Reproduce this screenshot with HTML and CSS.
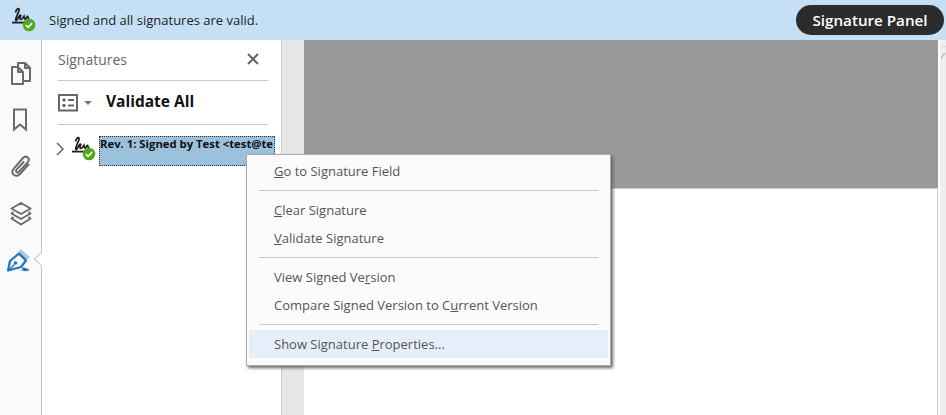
FILE: index.html
```html
<!DOCTYPE html>
<html>
<head>
    <meta charset="utf-8">
    <title>Signatures</title>
    <link rel="stylesheet" href="styles.css">
</head>
<body>
    <svg class="defs" width="0" height="0">
        <symbol id="signed" viewBox="0 0 26 26">
            <path d="M4.500 5.500C5 3 7 .8 8 2c.8 1-.7 3.500-2 6.500-1 2.500-1.800 5-1 5.300 1 .4 2-3 3.500-5 1-1.200 1.700-.6 1 .8-.8 1.500-.8 3 .7 2.700 1.200-.3 1.800-1.500 2.800-3 .4 2 .6 3 1.600 2.500.8-.4 1.500-2 2-3 0 2 .5 2.500 1.700 2.200" fill="none" stroke="#1d1d1d" stroke-width="1.700"/>
            <rect x="1" y="14.700" width="13" height="1.800" fill="#1d1d1d"/>
            <circle cx="18" cy="18" r="6.300" fill="#4fa91c"/>
            <path d="M14.800 18l2.300 2.300 4-4.100" fill="none" stroke="#fff" stroke-width="1.700"/>
        </symbol>
    </svg>

    <div class="top-bar">
        <div class="status">
            <svg class="sig-icon" width="26" height="26"><use href="#signed"/></svg>
            <span>Signed and all signatures are valid.</span>
        </div>
        <button class="panel-btn">Signature Panel</button>
    </div>

    <div class="main">
        <div class="rail">
            <svg class="rail-icon" width="24" height="24" viewBox="0 0 24 24">
                <path d="M9 6V2h7l5 5v13h-7M16 2v5h5M9 6H3v17h11v-3M9 6l5 5v9M9 6v5h5" fill="none" stroke="#6b6b6b" stroke-width="2" stroke-linejoin="round"/>
            </svg>
            <svg class="rail-icon" width="24" height="24" viewBox="0 0 24 24">
                <path d="M5 1.500h12v20l-6-5-6 5z" fill="none" stroke="#6b6b6b" stroke-width="2"/>
            </svg>
            <svg class="rail-icon" width="24" height="24" viewBox="0 0 24 24">
                <path d="M20 9l-9 10c-2 2.200-5 2.200-6.500.6s-1.500-4 .5-6.300L14 3c1.500-1.600 3.500-1.600 4.800-.4s1.300 3-.2 4.700l-8.500 9.400c-.8.900-1.800 1-2.500.3s-.6-1.700.2-2.600L15 6.500" fill="none" stroke="#6b6b6b" stroke-width="2"/>
            </svg>
            <svg class="rail-icon" width="24" height="24" viewBox="0 0 24 24">
                <path d="M12 1l9.500 5.500-9.500 5.500-9.500-5.500z" fill="none" stroke="#6b6b6b" stroke-width="2" stroke-linejoin="round"/>
                <path d="M4.500 10L2.500 11.500l9.500 5.500 9.500-5.500-2-1.500M4.500 15L2.500 16.500l9.500 6 9.500-6-2-1.500" fill="none" stroke="#6b6b6b" stroke-width="2" stroke-linejoin="round"/>
            </svg>
            <div class="rail-active">
                <svg class="rail-icon pen" width="24" height="24" viewBox="0 0 24 24">
                    <path d="M10 5L13.500 0 23 8l-4 4z" fill="#a9cbe8"/>
                    <path d="M1 21.500L3 12l9-7.500 7 7-5 6.500z" fill="none" stroke="#2272c3" stroke-width="2.200" stroke-linejoin="round"/>
                    <path d="M1 21.500l6.500-6" stroke="#2272c3" stroke-width="1.500"/>
                    <circle cx="8.500" cy="14" r="1.800" fill="#2272c3"/>
                    <path d="M15.500 21.500c.5-2 1-3 1.500-2s0 2 .5 2 1-2 1.500-2 0 2 .5 2 1.500-1 2.500-1" fill="none" stroke="#2272c3" stroke-width="1.700"/>
                </svg>
                <span class="rail-notch"></span>
            </div>
        </div>

        <div class="panel">
            <div class="panel-head">
                <span class="panel-title">Signatures</span>
                <svg class="close" width="14" height="14" viewBox="0 0 14 14">
                    <path d="M2 2l10 10M12 2L2 12" stroke="#666" stroke-width="2"/>
                </svg>
            </div>
            <div class="panel-tools">
                <svg width="20" height="18" viewBox="0 0 20 18">
                    <rect x="1" y="1" width="18" height="15.500" fill="none" stroke="#666" stroke-width="2"/>
                    <circle cx="6" cy="6" r="1.700" fill="#666"/>
                    <circle cx="6" cy="11.500" r="1.700" fill="#666"/>
                    <path d="M10 6h6M10 11.500h6" stroke="#666" stroke-width="2"/>
                </svg>
                <span class="caret"></span>
                <span class="validate">Validate All</span>
            </div>
            <div class="sig-row">
                <svg class="chev" width="10" height="14" viewBox="0 0 10 14">
                    <path d="M2 1l6 6-6 6" fill="none" stroke="#666" stroke-width="1.500"/>
                </svg>
                <svg class="sig-icon-small" width="26" height="26"><use href="#signed"/></svg>
                <div class="sig-label">Rev. 1: Signed by Test &lt;test@te</div>
            </div>
        </div>

        <div class="gutter"></div>

        <div class="doc">
            <div class="doc-gray"></div>
            <div class="doc-page"></div>
        </div>

        <div class="scrollbar">
            <div class="scroll-cap"></div>
            <svg width="6" height="8" viewBox="0 0 6 8">
                <path d="M1 7l4-5" stroke="#bbb" stroke-width="1.500"/>
            </svg>
        </div>
    </div>

    <div class="menu">
        <div class="menu-item"><u>G</u>o to Signature Field</div>
        <div class="menu-sep"></div>
        <div class="menu-item"><u>C</u>lear Signature</div>
        <div class="menu-item"><u>V</u>alidate Signature</div>
        <div class="menu-sep"></div>
        <div class="menu-item">View Signed Ve<u>r</u>sion</div>
        <div class="menu-item">Compare Signed Version to C<u>u</u>rrent Version</div>
        <div class="menu-sep"></div>
        <div class="menu-item active">Show Signature <u>P</u>roperties...</div>
    </div>
</body>
</html>
```

FILE: styles.css
```css
html, body {
    height: 100%;
}
body {
    margin: 0;
    overflow: hidden;
    background-color: white;
    color: #444;
    font-family: "Open Sans", sans-serif;
    font-size: 13px;
    display: flex;
    flex-direction: column;
}
.defs {
    position: absolute;
}

.top-bar {
    height: 40px;
    flex: none;
    background-color: #c5e0f5;
    display: flex;
    align-items: center;
    justify-content: space-between;
    padding: 0 2px 0 11px;
}
.status {
    display: flex;
    align-items: center;
    gap: 12px;
    color: #222;
    font-size: 13px;
}
.sig-icon {
    display: block;
    flex: none;
}
.panel-btn {
    width: 148px;
    height: 30px;
    border: none;
    border-radius: 15px;
    background-color: #2c2c2c;
    color: white;
    font-family: inherit;
    font-size: 15.2px;
    font-weight: 600;
}

.main {
    flex: 1;
    display: flex;
    min-height: 0;
}
.rail {
    width: 41px;
    flex: none;
    border-right: 1px solid #c4c4c4;
    display: flex;
    flex-direction: column;
    align-items: center;
    gap: 23px;
    padding-top: 21px;
    background-color: #fafafa;
}
.rail-icon {
    display: block;
}
.pen {
    transform: translateX(-2px);
}
.rail-active {
    position: relative;
}
.rail-notch {
    position: absolute;
    right: -13px;
    top: 5px;
    width: 9px;
    height: 9px;
    background-color: white;
    border-left: 1px solid #c4c4c4;
    border-bottom: 1px solid #c4c4c4;
    transform: rotate(45deg);
}

.panel {
    width: 239px;
    flex: none;
    background-color: white;
    padding: 0 13px 0 16px;
    box-sizing: border-box;
}
.panel-head {
    height: 40px;
    display: flex;
    align-items: center;
    justify-content: space-between;
    padding-right: 8px;
    border-bottom: 1px solid #c8c8c8;
}
.panel-title {
    font-size: 14px;
    color: #666;
    margin-top: -2px;
}
.close {
    margin-top: -2px;
}
.panel-tools {
    height: 43px;
    display: flex;
    align-items: center;
    border-bottom: 1px solid #c8c8c8;
}
.caret {
    width: 0;
    height: 0;
    margin-left: 6px;
    border-left: 4px solid transparent;
    border-right: 4px solid transparent;
    border-top: 4px solid #777;
}
.validate {
    margin-left: 14px;
    margin-top: -3px;
    font-size: 15.5px;
    font-weight: 700;
    color: #111;
}
.sig-row {
    display: flex;
    align-items: flex-start;
    margin-top: 11px;
    margin-right: -7px;
}
.chev {
    margin: 6px 6px 0 -3px;
    flex: none;
}
.sig-icon-small {
    flex: none;
    margin-right: 2px;
}
.sig-label {
    height: 30px;
    flex: 1;
    overflow: hidden;
    white-space: nowrap;
    background-color: #9cc1dc;
    border: 1px dotted #333;
    box-sizing: border-box;
    font-size: 11.3px;
    font-weight: 700;
    color: #111;
    line-height: 14px;
}

.gutter {
    width: 23px;
    flex: none;
    box-sizing: border-box;
    border-left: 1px solid #cfcfcf;
    background-color: #e6e6e6;
}
.doc {
    flex: 1;
    display: flex;
    flex-direction: column;
}
.doc-gray {
    height: 148px;
    background-color: #999;
}
.doc-page {
    flex: 1;
    background-color: white;
    border-top: 1px solid #ccc;
    border-right: 1px solid #ccc;
}
.scrollbar {
    width: 8px;
    flex: none;
    box-sizing: border-box;
    border-left: 2px solid white;
    background-color: #efefef;
}
.scroll-cap {
    height: 6px;
    border-bottom: 1px solid #d8d8d8;
    margin-bottom: 4px;
}
.scrollbar svg {
    display: block;
}

/* context menu lies over the panels */
.menu {
    position: absolute;
    left: 246px;
    top: 154px;
    width: 365px;
    height: 212px;
    box-sizing: border-box;
    padding: 2px 2px;
    background-color: #fbfbfb;
    border: 1px solid #aaa;
    box-shadow: 2px 2px 3px #666;
}
.menu-item {
    height: 28px;
    line-height: 28px;
    padding-left: 25px;
    font-size: 13px;
    color: #555;
    white-space: nowrap;
}
.menu-item.active {
    background-color: #e6eff9;
}
.menu-sep {
    height: 1px;
    margin: 5px 10px;
    background-color: #c8c8c8;
}
```
